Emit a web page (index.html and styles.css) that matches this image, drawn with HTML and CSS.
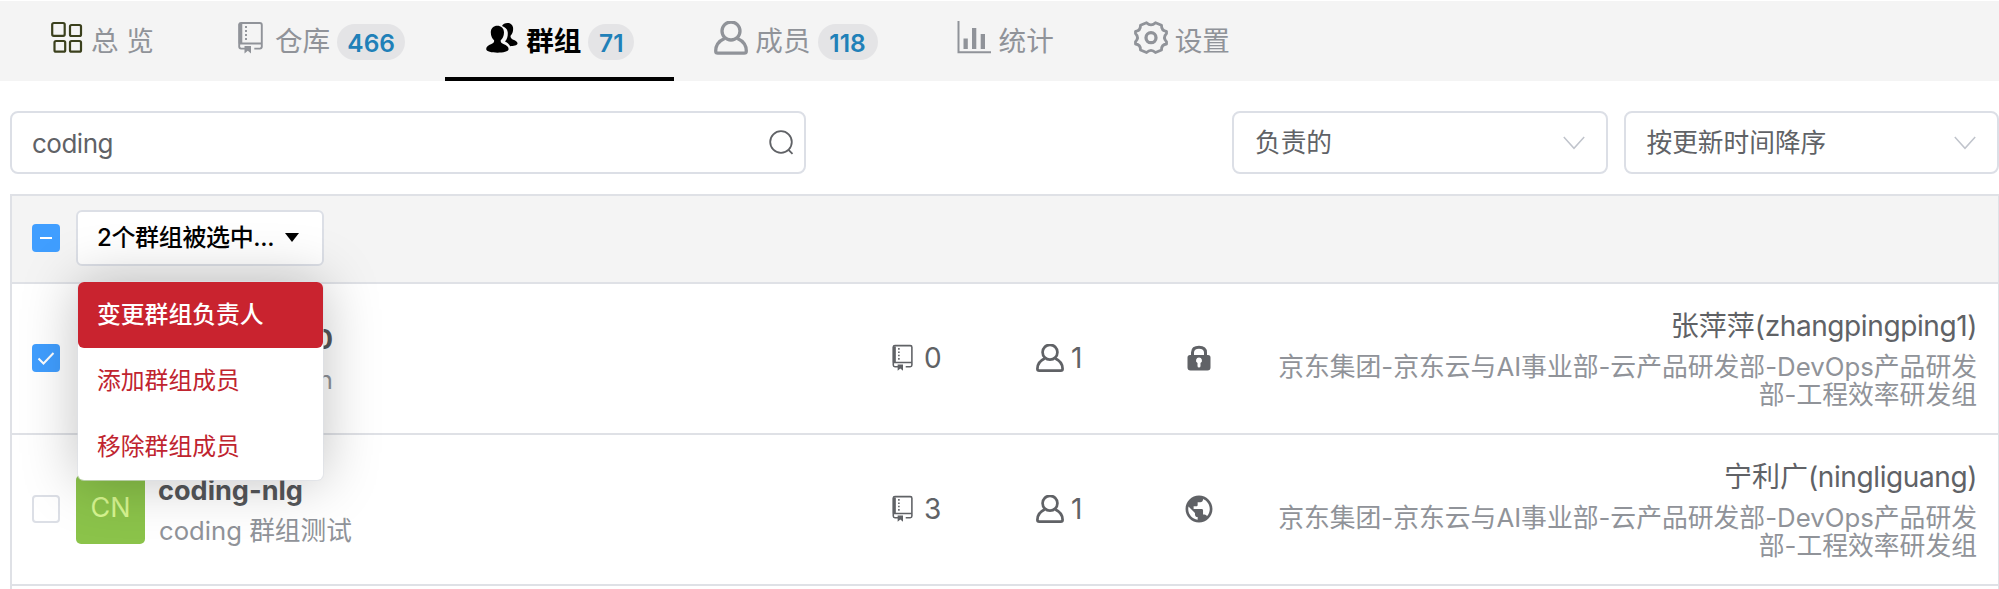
FILE: index.html
```html
<!DOCTYPE html>
<html lang="zh-CN">
<head>
<meta charset="utf-8">
<title>群组</title>
<link rel="stylesheet" href="styles.css">
</head>
<body>
<svg class="defs" width="0" height="0">
  <symbol id="repo" viewBox="0 0 34 34">
    <path d="M7.2 2h18.600a2 2 0 0 1 2 2v21.600a2 2 0 0 1-2 2h-5.500M11 27.600H7.200a2 2 0 0 1-2-2V4a2 2 0 0 1 2-2M5.500 22.500h22" fill="none" stroke="currentColor" stroke-width="1.900"/>
    <path d="M4.600 3h3.700v19.500H4.600zM10.500 25h6.500v7.500l-3.200-2.800-3.300 2.800z" fill="currentColor"/>
    <path d="M12 5v14" stroke="currentColor" stroke-width="1.900" stroke-dasharray="2 2"/>
  </symbol>
  <symbol id="user" viewBox="0 0 34 34">
    <g fill="none" stroke="currentColor" stroke-width="3.300" stroke-linejoin="round"><circle cx="17" cy="10" r="9"/><path d="M10.500 17.500C5 20 1.700 25 1.700 30q0 2.200 2.200 2.200h26.200q2.200 0 2.200-2.200c0-5-3.300-10-8.800-12.500"/></g>
  </symbol>
  <symbol id="chevron" viewBox="0 0 22 14"><path d="M.8 1L11 12.300 21.200 1" fill="none" stroke="currentColor" stroke-width="1.500"/></symbol>
</svg>

<nav class="tabs">
  <a class="tab"><svg class="tab-icon olive" viewBox="0 0 34 34"><g fill="none" stroke="currentColor" stroke-width="2.200"><rect x="2.200" y="2" width="12.500" height="12.800" rx="1.500"/><rect x="20" y="4" width="11" height="11" rx="1.500"/><rect x="4.500" y="20" width="10.700" height="10.700" rx="1.500"/><rect x="20" y="20" width="11" height="10.700" rx="1.500"/></g></svg><span>总 览</span></a>
  <a class="tab"><svg class="tab-icon"><use href="#repo"/></svg><span>仓库</span><b class="badge wide">466</b></a>
  <a class="tab active"><svg class="tab-icon" viewBox="0 0 34 34"><g fill="currentColor"><path d="M17 5c1.500-4 10-4.600 11 1.200.5 3.500-.4 6.500-2.300 8.300-.5 1.800.1 3 2 3.900 3 1.200 5 2.200 4.800 4.200-.3 2-4 2.600-7.300 2.600-1.200-2.200-3-3.800-5.200-4.700 2.600-3 3-6.200 2.700-9.600-.4-3-2.800-5-5.700-5.900z"/><path d="M12.300 4.700c3.600 0 6.700 2.200 6.700 6.800 0 3.400-1.600 6.500-3.300 7.800-.2 1.600.5 2.900 2.700 3.800 3.400 1.300 5.200 2.800 5.200 5 0 2.600-5.500 3.600-11.100 3.600S1.200 30.700 1.200 28.100c0-2.200 1.800-3.700 5.200-5 2.200-.9 2.900-2.200 2.700-3.800-1.700-1.300-3.300-4.400-3.300-7.800 0-4.600 2.900-6.800 6.500-6.800z"/></g></svg><span>群组</span><b class="badge narrow">71</b></a>
  <a class="tab"><svg class="tab-icon"><use href="#user"/></svg><span>成员</span><b class="badge">118</b></a>
  <a class="tab"><svg class="tab-icon" viewBox="0 0 34 34"><path d="M.5 0v31.200H33" fill="none" stroke="currentColor" stroke-width="2"/><path d="M5.500 17.500h4.300V28H5.500zM14 7h4.300v21H14zM22.700 13H27v15h-4.300z" fill="currentColor"/></svg><span>统计</span></a>
  <a class="tab"><svg class="tab-icon" viewBox="0 0 34 34"><g fill="none" stroke="currentColor" stroke-width="2.800" stroke-linejoin="round"><path d="M12.500 1.700Q17 6 21.500 1.700L27.500 4.300Q27.300 9.800 32.500 10.300V12.500Q28.500 16.700 32.500 20.800V23Q27.300 23.500 27.500 29L21.500 31.500Q17 27.200 12.500 31.500L6.500 29Q6.700 23.500 1.500 23V20.800Q5.500 16.700 1.500 12.500V10.300Q6.700 9.800 6.500 4.300Z"/><circle cx="17" cy="16.700" r="5" stroke-width="3.300"/></g></svg><span>设置</span></a>
</nav>

<div class="filters">
  <div class="field search"><span class="query">coding</span><svg class="search-icon" viewBox="0 0 26 26"><g fill="none" stroke="currentColor" stroke-width="1.800"><circle cx="12" cy="12" r="10.800"/><path d="M19.300 19.600l4.200 4.300"/></g></svg></div>
  <div class="field select"><span>负责的</span><svg class="arrow"><use href="#chevron"/></svg></div>
  <div class="field select"><span>按更新时间降序</span><svg class="arrow"><use href="#chevron"/></svg></div>
</div>

<main class="table">
  <div class="bulk">
    <span class="check on"><svg viewBox="0 0 28 28"><path d="M8 14h12" stroke="#fff" stroke-width="2"/></svg></span>
    <div class="dropdown">
      <button class="trigger"><span>2个群组被选中...</span><i class="caret"></i></button>
      <ul class="menu">
        <li class="current">变更群组负责人</li>
        <li>添加群组成员</li>
        <li>移除群组成员</li>
      </ul>
    </div>
  </div>

  <div class="row">
    <span class="check on"><svg viewBox="0 0 28 28"><path d="M6.500 14.500l5 5L21.500 9" fill="none" stroke="#fff" stroke-width="2"/></svg></span>
    <span class="avatar blank"></span>
    <div class="group tail"><div class="name">0</div><div class="desc">n</div></div>
    <div class="stat repos"><svg class="stat-repo"><use href="#repo"/></svg>0</div>
    <div class="stat members"><svg class="stat-user"><use href="#user"/></svg>1</div>
    <svg class="access" viewBox="0 0 28 28"><path d="M7.500 12V8.500Q7.500 3.200 14 3.200T20.500 8.500V12" fill="none" stroke="currentColor" stroke-width="3"/><path fill-rule="evenodd" d="M5 11h18q2.500 0 2.500 2.500v10q0 3-3 3h-17q-3 0-3-3v-10Q2.500 11 5 11zm9 2.500a3 3 0 0 0-1.500 5.600V22a1.500 1.500 0 0 0 3 0v-2.900a3 3 0 0 0-1.500-5.600z" fill="currentColor"/></svg>
    <div class="owner"><div class="person">张萍萍<span class="account">(zhangpingping1)</span></div><div class="dept">京东集团-京东云与AI事业部-云产品研发部-DevOps产品研发<br>部-工程效率研发组</div></div>
  </div>

  <div class="row">
    <span class="check"></span>
    <span class="avatar">CN</span>
    <div class="group"><div class="name">coding-nlg</div><div class="desc">coding 群组测试</div></div>
    <div class="stat repos"><svg class="stat-repo"><use href="#repo"/></svg>3</div>
    <div class="stat members"><svg class="stat-user"><use href="#user"/></svg>1</div>
    <svg class="access" viewBox="1.600 1.600 20.800 20.800"><path fill="currentColor" d="M12 2C6.480 2 2 6.480 2 12s4.480 10 10 10 10-4.480 10-10S17.520 2 12 2zm-1 17.930c-3.950-.49-7-3.850-7-7.930 0-.62.080-1.210.21-1.790L9 15v1c0 1.100.9 2 2 2v1.930zm6.900-2.540c-.26-.81-1-1.390-1.900-1.390h-1v-3c0-.55-.45-1-1-1H8v-2h2c.55 0 1-.45 1-1V7h2c1.100 0 2-.9 2-2v-.41c2.930 1.190 5 4.060 5 7.410 0 2.080-.8 3.970-2.100 5.390z"/></svg>
    <div class="owner"><div class="person">宁利广<span class="account">(ningliguang)</span></div><div class="dept">京东集团-京东云与AI事业部-云产品研发部-DevOps产品研发<br>部-工程效率研发组</div></div>
  </div>
</main>
</body>
</html>
```

FILE: styles.css
```css
* { box-sizing: border-box; }

body {
  margin: 0;
  height: 589px;
  overflow: hidden;
  background: #fff;
  color: #606266;
  font-family: Inter, "Noto Sans CJK SC", sans-serif;
  font-size: 25.7px;
  line-height: 1;
}

svg { display: block; flex: none; overflow: visible; }
.defs { position: absolute; }

/* Tab bar */
.tabs {
  display: flex;
  height: 80px;
  margin-top: 1px;
  padding-left: 10px;
  background: #f4f4f4;
}
.tab {
  display: flex;
  align-items: center;
  gap: 7px;
  padding: 0 40px 3px;
  border-bottom: 4px solid transparent;
  color: #909399;
  font-size: 27.6px;
  white-space: nowrap;
}
.tab span { line-height: 40px; padding-top: 7px; }
.tab.active { border-bottom-color: #000; color: #000; font-weight: 700; }
.tab-icon { width: 34px; height: 34px; }
.olive { color: #3b401d; }
.badge {
  width: 60px;
  height: 36px;
  margin-top: 8px;
  border-radius: 18px;
  background: #e4e4e6;
  color: #2080b8;
  font-size: 24.5px;
  font-weight: 600;
  line-height: 38px;
  text-align: center;
}
.badge.wide { width: 68px; }
.badge.narrow { width: 46px; }

/* Filters */
.filters { display: flex; gap: 16px; padding: 30px 0 0 10px; }
.field {
  display: flex;
  align-items: center;
  justify-content: space-between;
  height: 63px;
  border: 2px solid #dcdfe6;
  border-radius: 8px;
  line-height: 40px;
}
.search { width: 796px; margin-right: auto; padding: 0 9px 0 20px; }
.query { font-size: 26px; letter-spacing: -0.5px; padding-top: 2px; }
.search-icon { width: 26px; height: 26px; }
.select { width: 375.500px; padding: 0 21px; }
.arrow { width: 22px; height: 14px; color: #c0c4cc; }

/* Group table */
.table { height: 395px; margin: 20px 0 0 10px; border: 2px solid #dfe1e6; border-width: 2px 1px 0 2px; }
.bulk {
  display: flex;
  align-items: center;
  gap: 16px;
  height: 88px;
  padding: 0 0 3px 20px;
  border-bottom: 2px solid #dfe1e6;
  background: #f4f4f4;
}
.row {
  display: flex;
  align-items: center;
  height: 151px;
  padding: 0 21px 2px 20px;
  border-bottom: 2px solid #dfe1e6;
}
.check { flex: none; width: 28px; height: 28px; border: 2px solid #dcdfe6; border-radius: 4px; background: #fff; }
.check.on { border: 0; background: #409eff; }

.dropdown { position: relative; }
.trigger {
  display: flex;
  align-items: center;
  gap: 11px;
  width: 248px;
  height: 56px;
  padding: 0 19px;
  border: 2px solid #dcdfe6;
  border-radius: 6px;
  background: #fff;
  color: #000;
  font: 500 24px/36px Inter, "Noto Sans CJK SC", sans-serif;
  letter-spacing: -0.35px;
  white-space: nowrap;
}
.caret { border: solid transparent; border-width: 9px 7px 0; border-top-color: #000; }
.menu {
  position: absolute;
  z-index: 2;
  top: 72px;
  left: 1.5px;
  width: 245px;
  height: 198px;
  margin: 0;
  padding: 0;
  border-radius: 6px;
  background: #fff;
  box-shadow: 0 0 0 1px rgba(220, 223, 230, .6), 0 0 56px rgba(0, 0, 0, .25);
  list-style: none;
}
.menu li { height: 66px; padding-left: 19.5px; border-radius: 6px; color: #c0242f; font-size: 23.8px; line-height: 66px; }
.menu .current { background: #c9232f; color: #fff; font-weight: 500; }

.avatar {
  flex: none;
  width: 69px;
  height: 69px;
  margin: 2px 14px 0 16px;
  border-radius: 5px;
  background: #8bc34a;
  color: #d7f590;
  font-size: 27px;
  line-height: 66px;
  text-align: center;
}
.avatar.blank { background: none; }
.group { width: 730px; padding-top: 5px; white-space: nowrap; }
.group.tail { width: 174px; margin-right: 556px; text-align: right; }
.name { color: #55575a; font-weight: 700; font-size: 27.100px; line-height: 40px; margin-left: -1px; }
.desc { color: #909399; line-height: 40px; }
.stat { display: flex; align-items: center; font-size: 28px; line-height: 40px; }
.repos { width: 147px; gap: 7px; }
.members { width: 149px; gap: 7px; }
.stat-repo, .stat-user { width: 28px; height: 28px; }
.access { width: 28px; height: 28px; }
.owner { flex: 1; text-align: right; white-space: nowrap; }
.person { margin-bottom: 7px; font-size: 28px; line-height: 40px; }
.account { letter-spacing: -0.4px; }
.dept { color: #909399; font-size: 25.8px; line-height: 28px; }
```
